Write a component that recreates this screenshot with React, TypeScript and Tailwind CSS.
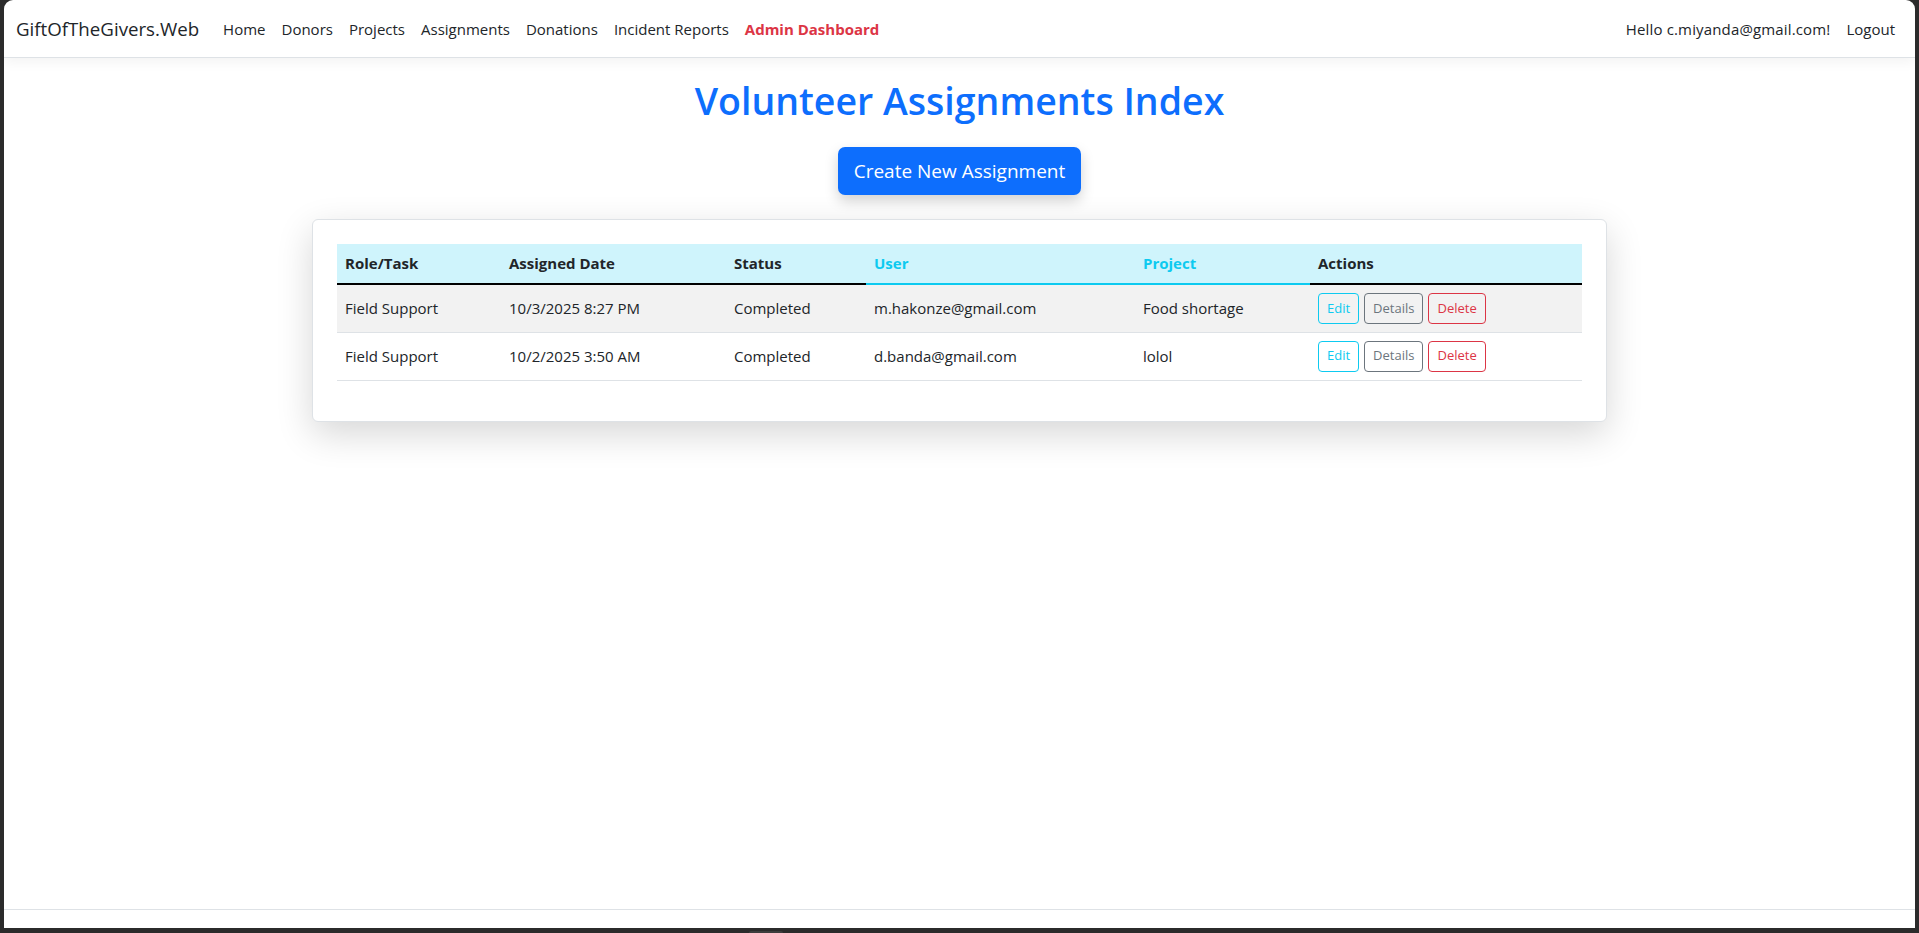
const rows = [
  { role: "Field Support", date: "10/3/2025 8:27 PM", status: "Completed", user: "m.hakonze@gmail.com", project: "Food shortage" },
  { role: "Field Support", date: "10/2/2025 3:50 AM", status: "Completed", user: "d.banda@gmail.com", project: "lolol" },
];

const links = ["Home", "Donors", "Projects", "Assignments", "Donations", "Incident Reports"];

export default function App() {
  return (
    <div
      className="h-[933px] w-full bg-[#2b2b2b] flex flex-col pl-[4px] pr-[4px] pb-[5px] relative text-[#212529]"
      style={{ fontFamily: '"Segoe UI", "Open Sans", "Noto Sans", sans-serif' }}
    >
      <div className="flex-1 bg-white rounded-t-[9px] flex flex-col overflow-hidden">
        <nav className="h-[58px] shrink-0 border-b border-[#dee2e6] shadow-[0_4px_12px_rgba(0,0,0,0.05)] flex items-center justify-between px-3 pt-[1px]">
          <div className="flex items-center">
            <span className="text-[18.7px] mr-4 text-[#212529]">GiftOfTheGivers.Web</span>
            <div className="flex items-center text-[15px]">
              {links.map((l) => (
                <a key={l} className="px-2 py-2 text-[#212529]">
                  {l}
                </a>
              ))}
              <a className="px-2 py-2 font-bold text-[#dc3545]">Admin Dashboard</a>
            </div>
          </div>
          <div className="flex items-center text-[15px]">
            <span className="px-2 py-2 tracking-[0.15px]">Hello c.miyanda@gmail.com!</span>
            <a className="px-2 py-2">Logout</a>
          </div>
        </nav>

        <main className="flex-1 flex flex-col items-center">
          <h1 className="mt-[19px] text-[37.5px] leading-[48px] font-semibold text-[#0d6efd]">
            Volunteer Assignments Index
          </h1>
          <button className="mt-[22px] h-[48px] px-4 rounded-[7px] bg-[#0d6efd] text-white text-[19px] shadow-[0_6px_14px_rgba(0,0,0,0.18)]">
            Create New Assignment
          </button>

          <div className="mt-[24px] w-[1295px] border border-[#dee2e6] rounded-[6px] bg-white p-6 pb-[40px] shadow-[0_12px_36px_rgba(0,0,0,0.16)]">
            <table className="w-full border-collapse text-[15px]">
              <thead>
                <tr className="bg-[#cff4fc] h-[40px] text-left">
                  <th className="w-[164px] px-2 font-bold border-b-2 border-black">Role/Task</th>
                  <th className="w-[225px] px-2 font-bold border-b-2 border-black">Assigned Date</th>
                  <th className="w-[140px] px-2 font-bold border-b-2 border-black">Status</th>
                  <th className="w-[269px] px-2 font-bold text-[#0dcaf0] border-b-2 border-[#0dcaf0]">User</th>
                  <th className="w-[175px] px-2 font-bold text-[#0dcaf0] border-b-2 border-[#0dcaf0]">Project</th>
                  <th className="px-2 font-bold border-b-2 border-black">Actions</th>
                </tr>
              </thead>
              <tbody>
                {rows.map((r, i) => (
                  <tr key={i} className={`h-[48px] border-b border-[#dee2e6] ${i === 0 ? "bg-[#f2f2f2]" : "bg-white"}`}>
                    <td className="px-2">{r.role}</td>
                    <td className="px-2">{r.date}</td>
                    <td className="px-2">{r.status}</td>
                    <td className="px-2">{r.user}</td>
                    <td className="px-2">{r.project}</td>
                    <td className="px-2">
                      <div className="flex gap-[5px] text-[13px]">
                        <button className="h-[31px] px-2 border border-[#0dcaf0] text-[#0dcaf0] rounded-[4px]">Edit</button>
                        <button className="h-[31px] px-2 border border-[#6c757d] text-[#6c757d] rounded-[4px]">Details</button>
                        <button className="h-[31px] px-2 border border-[#dc3545] text-[#dc3545] rounded-[4px]">Delete</button>
                      </div>
                    </td>
                  </tr>
                ))}
              </tbody>
            </table>
          </div>
        </main>

        <footer className="h-[19px] shrink-0 border-t border-[#dee2e6]" />
      </div>
      <div className="absolute bottom-0 left-[749px] w-[34px] h-[2px] bg-[#3d3d3d] rounded-t-sm" />
    </div>
  );
}
